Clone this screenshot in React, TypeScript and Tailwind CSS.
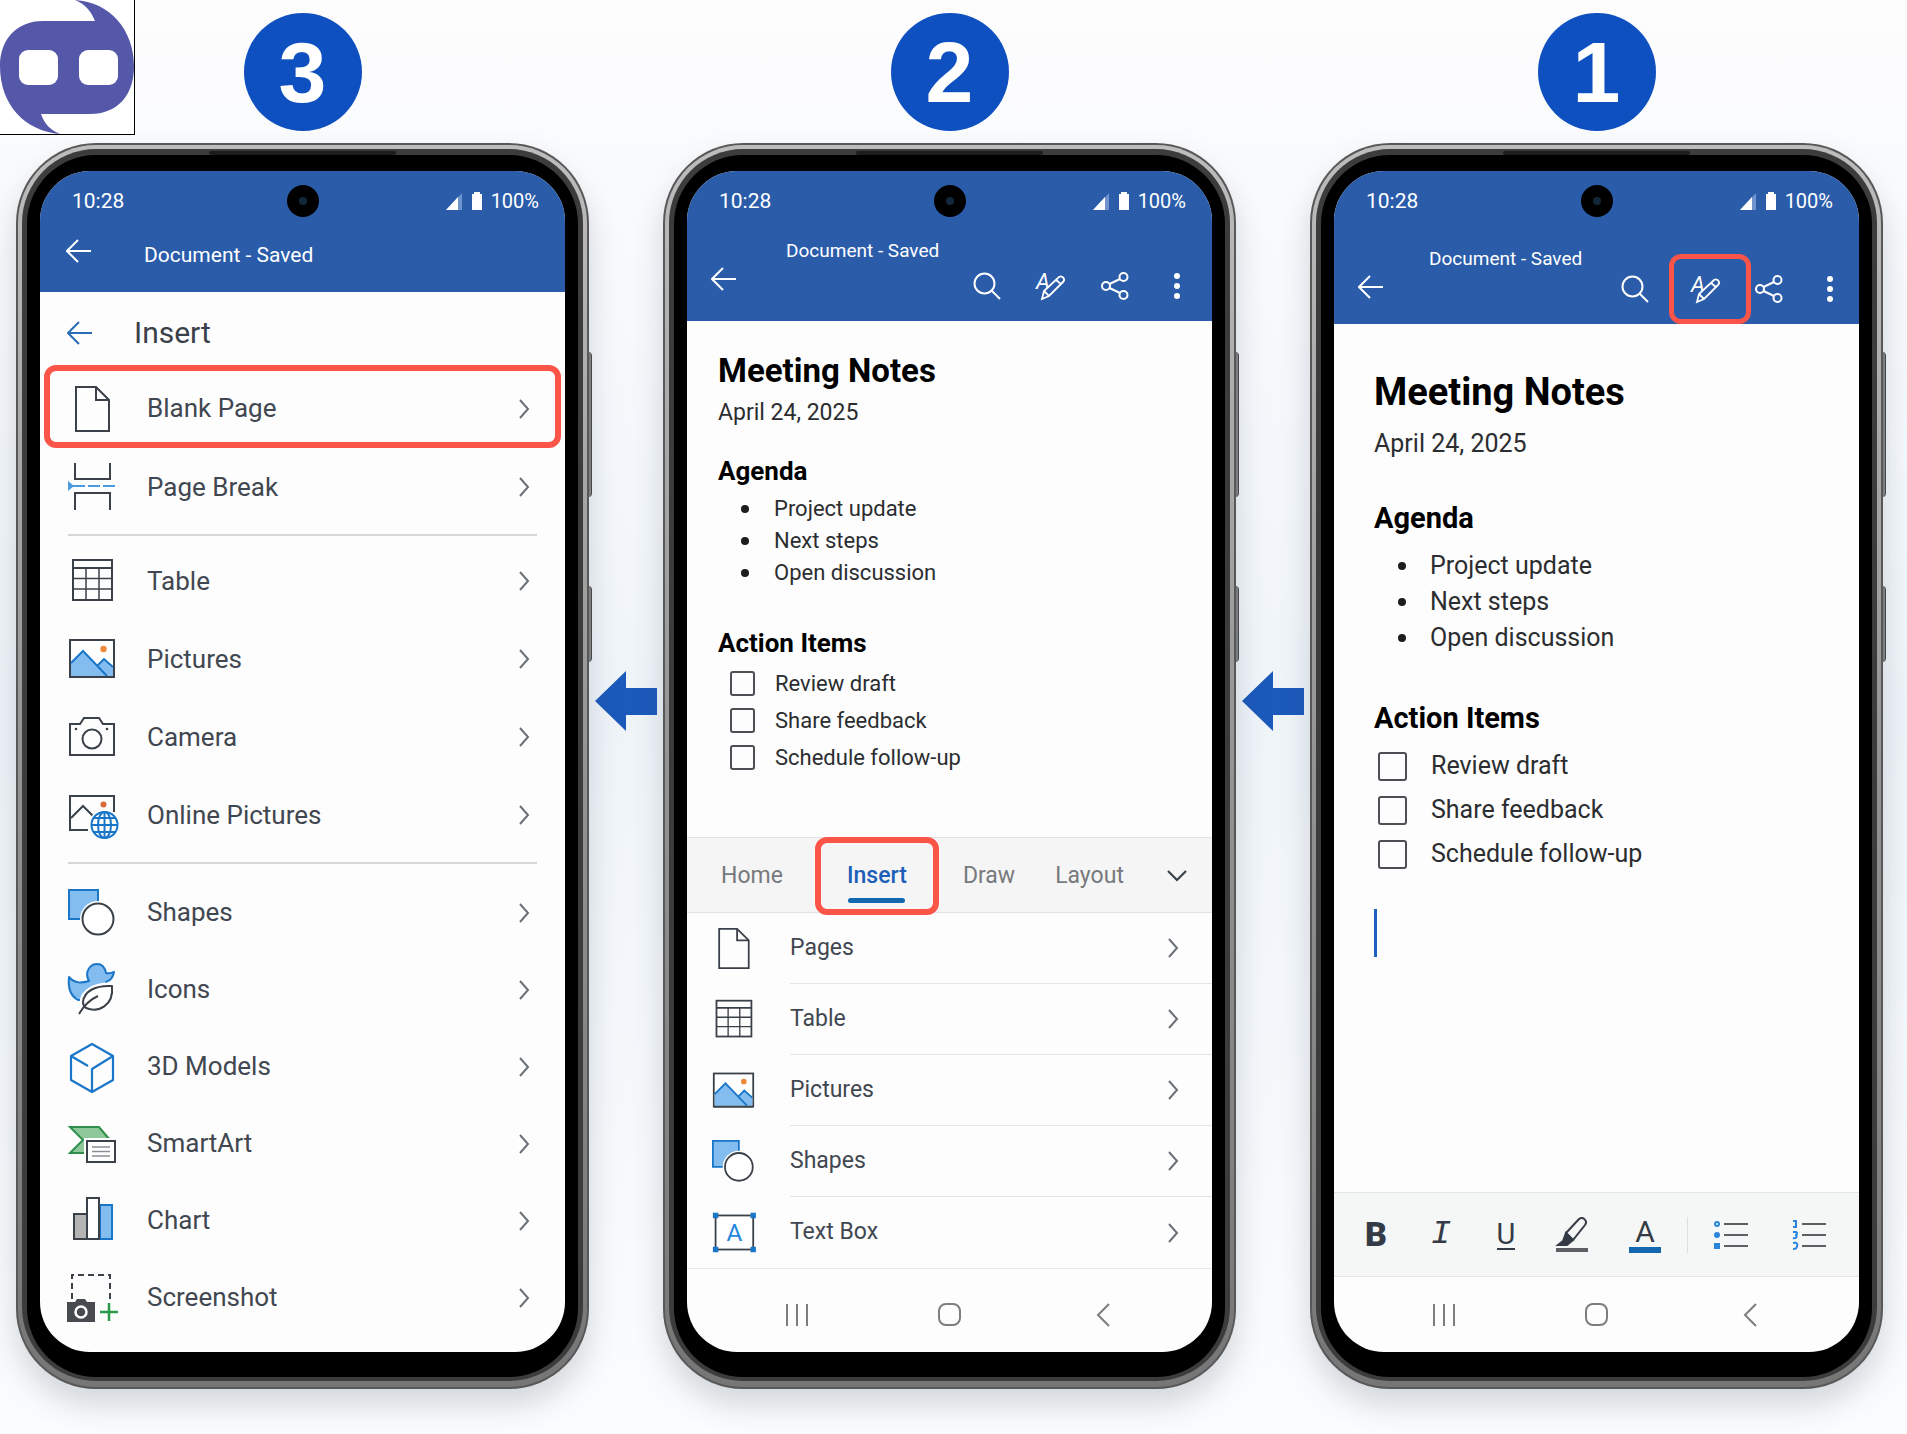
import { ReactNode } from "react";
import clsx from "clsx";

const DARK = "#3b4149";
const BLUE = "#1976c8";
const SKY = "#83bdf0";

/* ---------- list icons, all on a 48 grid ---------- */

function PageIcon() {
    return (
        <g fill="none" stroke={DARK} strokeWidth="2">
            <path d="M8 2H28L41 15V46H8Z" />
            <path d="M28 2V15H41" />
        </g>
    );
}

function PageBreakIcon() {
    return (
        <g fill="none" stroke={DARK} strokeWidth="2">
            <path d="M7 0V16H42V0" />
            <path d="M7 47V30H42V47" />
            <path d="M5 23H48" stroke="#4a9be0" strokeDasharray="12 3" />
            <path d="M0 18L6 23L0 28Z" fill="#4a9be0" stroke="none" />
        </g>
    );
}

function TableIcon() {
    return (
        <g fill="none" stroke={DARK} strokeWidth="2">
            <rect x="5" y="3" width="39" height="40" />
            <path d="M5 11H44" />
            <path d="M5 21.500H44M5 32H44M18 11V43M31 11V43" strokeWidth="1.500" />
        </g>
    );
}

function PicturesIcon() {
    return (
        <g strokeWidth="2">
            <rect x="2" y="5" width="44" height="37" fill="#fff" stroke={DARK} />
            <path d="M3 28L15 16L29 31L36 24L45 32V41H3Z" fill={SKY} />
            <path d="M3 28L15 16L39 41M29 31L36 24L45 32" fill="none" stroke={BLUE} />
            <path d="M2 42H46" stroke={DARK} />
            <circle cx="35.500" cy="14" r="3.200" fill="#ee8a3c" />
        </g>
    );
}

function CameraIcon() {
    return (
        <g fill="none" stroke={DARK} strokeWidth="2">
            <path d="M2 11H12L16 5H31L35 11H46V42H2Z" />
            <circle cx="24" cy="26" r="9.500" />
            <circle cx="8" cy="16" r="1.300" fill={DARK} stroke="none" />
            <circle cx="39" cy="16" r="1.300" fill={DARK} stroke="none" />
        </g>
    );
}

function OnlinePicturesIcon() {
    return (
        <g fill="none" strokeWidth="2">
            <path d="M20 39H2V5H46V21" stroke={DARK} />
            <path d="M3 27L15 15L25 25" stroke={DARK} />
            <circle cx="35.500" cy="13.500" r="3" fill="#d9693a" />
            <circle cx="36.500" cy="34" r="15.500" fill="#fff" />
            <circle cx="36.500" cy="34" r="13" stroke={BLUE} fill="#fff" />
            <ellipse cx="36.500" cy="34" rx="6.500" ry="13" stroke={BLUE} />
            <path d="M36.500 21V47M23.500 34H49.500M26 27H47M26 41H47" stroke={BLUE} />
        </g>
    );
}

function ShapesIcon() {
    return (
        <g strokeWidth="2">
            <rect x="1" y="1" width="29" height="29" fill={SKY} stroke={BLUE} />
            <circle cx="30" cy="30" r="18" fill="#fff" />
            <circle cx="30" cy="30" r="15.500" fill="#fff" stroke={DARK} />
        </g>
    );
}

function DuckLeafIcon() {
    return (
        <g strokeWidth="2" strokeLinejoin="round">
            <path
                d="M1 11C7 18 14 17 21 15C16 6 22 -2 29 -2C34 -2 37 2 38 7C41 8 43 7 46 6C45 12 41 15 38 16V20L14 34H10C1 29 0 20 1 11Z"
                fill={SKY}
                stroke={BLUE}
            />
            <path d="M44 20C28 19 15 26 15 37L18 42C28 47 46 44 44 20Z" fill="#fff" stroke="#fff" strokeWidth="7" />
            <path d="M44 20C28 19 16 25 15 36C15 40 18 42 18 42C30 47 46 40 44 20Z" fill="#fff" stroke={DARK} />
            <path d="M11 48C15 41 21 34 30 30" fill="none" stroke={DARK} />
        </g>
    );
}

function CubeIcon() {
    return (
        <path
            d="M24 1L45 13V37L24 49L3 37V13ZM3 13L20 23M45 13L24 26V49"
            fill="none"
            stroke={BLUE}
            strokeWidth="2.200"
            strokeLinejoin="round"
        />
    );
}

function SmartArtIcon() {
    return (
        <g strokeWidth="2">
            <path d="M2 7H31L42 20V33H2L15 20Z" fill="#8cc899" />
            <path d="M42 20L31 7H2L15 20L2 33H18" fill="none" stroke="#2f8f4c" />
            <rect x="16" y="18" width="36" height="27" fill="#fdfdfd" />
            <rect x="19" y="21" width="28" height="21" fill="#fff" stroke={DARK} />
            <path d="M24 27H42M24 31.500H42M24 36H42" stroke="#8b8f94" strokeWidth="1.500" />
        </g>
    );
}

function ChartIcon() {
    return (
        <g strokeWidth="2">
            <rect x="6" y="17" width="13" height="25" fill="#b4b4b4" stroke={DARK} />
            <rect x="32" y="8" width="12" height="34" fill={SKY} stroke={BLUE} />
            <rect x="19" y="1" width="12" height="41" fill="#fff" stroke={DARK} />
        </g>
    );
}

function ScreenshotIcon() {
    return (
        <g strokeWidth="2" fill="none">
            <path d="M4 25V1H42V29" stroke={DARK} strokeDasharray="6 4" />
            <path d="M-1 28H7L9 25H17L19 28H27V48H-1Z" fill="#474b50" />
            <circle cx="13" cy="38" r="5.500" stroke="#fff" strokeWidth="2.500" />
            <path d="M32 38H50M41 29V47" stroke="#2a9a4a" strokeWidth="2.500" />
        </g>
    );
}

function TextBoxIcon() {
    return (
        <g>
            <rect x="4" y="5" width="42" height="38" fill="#fff" stroke={DARK} strokeWidth="2" />
            <path d="M1 2H7V8H1ZM43 2H49V8H43ZM1 40H7V46H1ZM43 40H49V46H43Z" fill={BLUE} />
            <text x="25" y="33" textAnchor="middle" fontSize="27" fill="#2385dc" className="font-['Roboto',sans-serif]">
                A
            </text>
        </g>
    );
}

/* ---------- small glyphs ---------- */

function BackArrow({ className }: { className?: string }) {
    return (
        <svg viewBox="0 0 25 24" className={clsx("w-[25px] h-6", className)} fill="none" stroke="currentColor" strokeWidth="2">
            <path d="M12 1L1 12L12 23M1 12H25" />
        </svg>
    );
}

function ChevronRight() {
    return (
        <svg viewBox="0 0 12 20" className="w-3 h-5 shrink-0" fill="none" stroke="#6b7077" strokeWidth="2">
            <path d="M2 1L10 10L2 19" />
        </svg>
    );
}

function SearchGlyph() {
    return (
        <svg viewBox="0 0 28 28" className="size-7" fill="none" stroke="currentColor" strokeWidth="2">
            <circle cx="11.500" cy="11.500" r="10" />
            <path d="M18.500 18.500L27 27" />
        </svg>
    );
}

function EditGlyph() {
    return (
        <svg viewBox="0 0 28 28" className="size-7 overflow-visible" fill="none" stroke="currentColor" strokeWidth="1.800">
            <text x="-1" y="17" fontSize="22" fontStyle="italic" fill="currentColor" stroke="none" className="font-['Roboto',sans-serif]">
                A
            </text>
            <path d="M5 27L7 19L22 5C25 3 29 7 26 10L12 24Z" className="fill-[#2a5caa]" />
            <path d="M7 19L12 24M19 8L24 12" />
        </svg>
    );
}

function ShareGlyph() {
    return (
        <svg viewBox="0 0 28 28" className="size-7" fill="none" stroke="currentColor" strokeWidth="2">
            <circle cx="5" cy="14" r="4" />
            <circle cx="22.500" cy="5" r="4" />
            <circle cx="22.500" cy="23" r="4" />
            <path d="M8.500 12L19 7M8.500 16L19 21" />
        </svg>
    );
}

function DotsGlyph() {
    return (
        <svg viewBox="0 0 8 28" className="w-2 h-7" fill="currentColor">
            <circle cx="4" cy="4" r="3" />
            <circle cx="4" cy="14" r="3" />
            <circle cx="4" cy="24" r="3" />
        </svg>
    );
}

/* ---------- phone ---------- */

function Phone({ header, children }: { header: ReactNode; children: ReactNode }) {
    return (
        <div className="relative flex-1 flex flex-col">
            <div className="absolute -right-[3px] top-[209px] w-2 h-[145px] rounded-r-sm bg-linear-to-r from-[#555] to-[#8c8c8c] border-r border-[#444]" />
            <div className="absolute -right-[3px] top-[443px] w-2 h-[76px] rounded-r-sm bg-linear-to-r from-[#555] to-[#8c8c8c] border-r border-[#444]" />
            <div className="relative flex-1 flex flex-col rounded-[80px] p-[2px] bg-[#585858] shadow-[0_16px_30px_rgba(70,85,100,0.22)]">
                <div className="flex-1 flex flex-col rounded-[78px] px-[4px] pt-[4px] pb-[6px] bg-linear-to-b from-[#bdbdbd] via-[#949494] to-[#767676]">
                    <div className="relative flex-1 flex flex-col rounded-[74px] px-[5px] pt-[6px] pb-1 bg-[#3c3c3c]">
                        <div className="absolute top-[2px] left-1/3 right-1/3 h-1 rounded-full bg-[#1d1d1d]" />
                        <div className="flex-1 flex flex-col rounded-[69px] px-[13px] pt-4 pb-[25px] bg-black">
                            <div className="flex-1 flex flex-col rounded-[50px] overflow-hidden bg-[#fdfdfd]">
                                <header className="bg-[#2a5caa] text-white">
                                    <StatusBar />
                                    {header}
                                </header>
                                {children}
                            </div>
                        </div>
                    </div>
                </div>
            </div>
        </div>
    );
}

function StatusBar() {
    return (
        <div className="h-[60px] grid grid-cols-[1fr_auto_1fr] items-center px-[26px]">
            <span className="pl-[6px] text-[21px] leading-6">10:28</span>
            <div className="size-8 rounded-full bg-black flex items-center justify-center">
                <div className="size-2 rounded-full bg-[#12283a]" />
            </div>
            <div className="flex items-center justify-end">
                <svg viewBox="0 0 40 20" className="w-10 h-5 mr-[5px]">
                    <path d="M0 19L16 2V19Z" fill="#6f93cc" />
                    <path d="M0 19L12 6V19Z" fill="#fff" />
                    <path d="M26 3H28V1H34V3H36V19H26Z" fill="#fff" />
                </svg>
                <span className="text-[20px] leading-6">100%</span>
            </div>
        </div>
    );
}

function DocHeader({ marked }: { marked?: boolean }) {
    return (
        <div className={clsx("flex pl-6", marked ? "h-[93px]" : "h-[90px]")}>
            <button aria-label="Back" className={clsx("self-start", marked ? "mt-11" : "mt-9")}>
                <BackArrow />
            </button>
            <span className={clsx("self-start text-[19px] leading-6 whitespace-nowrap", marked ? "mt-4 ml-[46px]" : "mt-2 ml-[50px]")}>
                Document - Saved
            </span>
            <div className={clsx("self-end ml-auto flex items-center h-[70px]", marked ? "pr-[25px]" : "pr-[31px]")}>
                <button aria-label="Search">
                    <SearchGlyph />
                </button>
                {marked ? (
                    <button aria-label="Edit" className="ml-5 mr-1 w-[82px] h-[70px] border-[5px] border-[#fb5448] rounded-xl flex items-center pl-[18px]">
                        <EditGlyph />
                    </button>
                ) : (
                    <button aria-label="Edit" className="mx-9">
                        <EditGlyph />
                    </button>
                )}
                <button aria-label="Share">
                    <ShareGlyph />
                </button>
                <button aria-label="More" className={marked ? "ml-[43px]" : "ml-11"}>
                    <DotsGlyph />
                </button>
            </div>
        </div>
    );
}

const agenda = ["Project update", "Next steps", "Open discussion"];
const actions = ["Review draft", "Share feedback", "Schedule follow-up"];

function DocBody({ large }: { large?: boolean }) {
    return (
        <div className={clsx("flex-1 text-[#2b2d30]", large ? "pl-10 pt-11" : "pl-[31px] pt-7")}>
            <h1 className={clsx("font-bold text-black", large ? "text-[38px] leading-[48px]" : "text-[33px] leading-[44px]")}>Meeting Notes</h1>
            <p className={clsx("leading-10", large ? "text-[25px] mt-2" : "text-[23px]")}>April 24, 2025</p>
            <h2 className={clsx("font-bold text-black", large ? "text-[29px] leading-9 mt-9" : "text-[26px] leading-8 mt-[22px]")}>Agenda</h2>
            <ul className={clsx(large ? "text-[25px] leading-9 mt-3 pl-6" : "text-[22px] leading-8 mt-[6px] pl-[23px]")}>
                {agenda.map((item) => (
                    <li key={item} className={clsx("flex items-center", large ? "gap-6" : "gap-[25px]")}>
                        <span className="size-2 rounded-full bg-[#1d1d1d]" />
                        {item}
                    </li>
                ))}
            </ul>
            <h2 className={clsx("font-bold text-black", large ? "text-[29px] leading-9 mt-11" : "text-[26px] leading-8 mt-[38px]")}>Action Items</h2>
            <div className={clsx(large ? "text-[25px] mt-2 pl-1" : "text-[22px] mt-[6px] pl-3")}>
                {actions.map((item) => (
                    <label key={item} className={clsx("flex items-center", large ? "h-11 gap-6" : "h-[37px] gap-5")}>
                        <input
                            type="checkbox"
                            className={clsx("appearance-none border-2 border-[#4c4f54] rounded-[3px]", large ? "size-[29px]" : "size-[25px]")}
                        />
                        {item}
                    </label>
                ))}
            </div>
            {large && <div className="mt-[33px] h-12 w-[3px] bg-[#1f5fc0]" />}
        </div>
    );
}

function NavBar({ className }: { className: string }) {
    return (
        <nav className={clsx("flex items-center justify-between px-[99px] text-[#7d7d7d]", className)}>
            <button aria-label="Recent apps">
                <svg viewBox="0 0 22 24" className="w-[22px] h-6" stroke="currentColor" strokeWidth="2">
                    <path d="M1 1V23M11 1V23M21 1V23" />
                </svg>
            </button>
            <button aria-label="Home" className="size-[23px] rounded-[8px] border-2 border-current" />
            <button aria-label="Back">
                <svg viewBox="0 0 22 24" className="w-[22px] h-6" fill="none" stroke="currentColor" strokeWidth="2">
                    <path d="M18 1L7 12L18 23" />
                </svg>
            </button>
        </nav>
    );
}

/* ---------- screens ---------- */

function MenuRow({ icon, label, className }: { icon: ReactNode; label: string; className: string }) {
    return (
        <button className={clsx("flex items-center text-left text-[26px] text-[#414750]", className)}>
            <svg viewBox="0 0 48 48" className="size-12 overflow-visible shrink-0">
                {icon}
            </svg>
            <span className="ml-[31px] flex-1">{label}</span>
            <ChevronRight />
        </button>
    );
}

const mediaRows = [
    { label: "Table", icon: <TableIcon /> },
    { label: "Pictures", icon: <PicturesIcon /> },
    { label: "Camera", icon: <CameraIcon /> },
    { label: "Online Pictures", icon: <OnlinePicturesIcon /> },
];

const drawingRows = [
    { label: "Shapes", icon: <ShapesIcon /> },
    { label: "Icons", icon: <DuckLeafIcon /> },
    { label: "3D Models", icon: <CubeIcon /> },
    { label: "SmartArt", icon: <SmartArtIcon /> },
    { label: "Chart", icon: <ChartIcon /> },
    { label: "Screenshot", icon: <ScreenshotIcon /> },
];

function InsertMenuPhone() {
    return (
        <Phone
            header={
                <div className="h-[61px] flex items-start pl-[26px] pt-2">
                    <button aria-label="Back">
                        <BackArrow />
                    </button>
                    <span className="ml-[53px] mt-1 text-[21px] leading-6">Document - Saved</span>
                </div>
            }
        >
            <div className="flex flex-col pb-4">
                <div className="h-[73px] flex items-center pl-[27px] pt-2">
                    <button aria-label="Back" className="text-[#2a6cb8]">
                        <BackArrow />
                    </button>
                    <h2 className="ml-[42px] text-[30px] leading-9 text-[#3a4049]">Insert</h2>
                </div>
                <div className="mx-1 border-[6px] border-[#fb5448] rounded-xl flex">
                    <MenuRow icon={<PageIcon />} label="Blank Page" className="h-[71px] pt-1 flex-1 pl-[18px] pr-[25px]" />
                </div>
                <MenuRow icon={<PageBreakIcon />} label="Page Break" className="h-[78px] pl-7 pr-[35px]" />
                <hr className="mx-7 mt-2 mb-[6px] border-t-2 border-[#d5d7d9]" />
                {mediaRows.map((row) => (
                    <MenuRow key={row.label} {...row} className="h-[78px] pl-7 pr-[35px]" />
                ))}
                <hr className="mx-7 mt-2 mb-[10px] border-t-2 border-[#d5d7d9]" />
                {drawingRows.map((row) => (
                    <MenuRow key={row.label} {...row} className="h-[77px] pl-7 pr-[35px]" />
                ))}
            </div>
        </Phone>
    );
}

const ribbonRows = [
    { label: "Pages", icon: <PageIcon /> },
    { label: "Table", icon: <TableIcon /> },
    { label: "Pictures", icon: <PicturesIcon /> },
    { label: "Shapes", icon: <ShapesIcon /> },
    { label: "Text Box", icon: <TextBoxIcon /> },
];

function InsertTabPhone() {
    return (
        <Phone header={<DocHeader />}>
            <DocBody />
            <div className="h-[76px] flex items-center bg-[#f5f5f5] border-y border-[#e2e3e4] pt-[2px] pl-[34px] pr-[25px] text-[23px] text-[#77797c]">
                <button>Home</button>
                <button className="ml-8 w-[124px] h-[78px] border-[6px] border-[#fb5448] rounded-xl flex flex-col items-center justify-end pb-[6px] text-[#1c5fb8] font-medium">
                    <span className="leading-8">Insert</span>
                    <span className="mt-[6px] w-[57px] h-[5px] rounded-full bg-[#1468b0]" />
                </button>
                <button className="ml-6">Draw</button>
                <button className="ml-10">Layout</button>
                <button aria-label="More tabs" className="ml-auto">
                    <svg viewBox="0 0 20 12" className="w-5 h-3" fill="none" stroke="#3b4149" strokeWidth="2.200">
                        <path d="M1 1L10 10L19 1" />
                    </svg>
                </button>
            </div>
            <div className="border-b border-[#e6e8ea]">
                {ribbonRows.map((row, index) => (
                    <button key={row.label} className="w-full h-[71px] flex items-center pl-[25px] text-left text-[23px] text-[#414750]">
                        <svg viewBox="0 0 48 48" className="size-[43px] overflow-visible shrink-0">
                            {row.icon}
                        </svg>
                        <span
                            className={clsx(
                                "ml-[35px] flex-1 self-stretch flex items-center justify-between pr-[33px]",
                                index < ribbonRows.length - 1 && "border-b border-[#e3e6e8]"
                            )}
                        >
                            {row.label}
                            <ChevronRight />
                        </span>
                    </button>
                ))}
            </div>
            <NavBar className="h-[83px] pt-2" />
        </Phone>
    );
}

function FormatBar() {
    return (
        <div className="h-[85px] flex items-center bg-[#f5f6f6] border-y border-[#e2e3e4] pl-[26px] text-[#343b46]">
            <div className="flex items-center gap-[33px]">
                <button aria-label="Bold" className="w-8 text-[34px] font-black">B</button>
                <button aria-label="Italic" className="w-8 text-[34px] italic font-['Liberation_Mono',monospace]">I</button>
                <button aria-label="Underline" className="w-8 text-[29px] leading-7">
                    <span className="inline-block border-b-2 border-current">U</span>
                </button>
                <button aria-label="Highlight">
                    <svg viewBox="0 0 34 36" className="w-[34px] h-9" fill="none" stroke="currentColor" strokeWidth="2">
                        <path d="M11 16L24 2C28 -1 33 4 30 8L18 23Z" />
                        <path d="M11 16L18 23L12 28H3L8 24Z" fill="currentColor" />
                        <path d="M1 33H33" stroke="#5d6064" strokeWidth="4" />
                    </svg>
                </button>
            </div>
            <button aria-label="Font color" className="ml-10 w-8 text-[30px] leading-[30px] text-center border-b-[6px] border-[#1468b0]">A</button>
            <span className="ml-[26px] w-px h-9 bg-[#dcdedf]" />
            <button aria-label="Bullets" className="ml-[26px]">
                <svg viewBox="0 0 34 30" className="w-[34px] h-[30px]" fill="none" strokeWidth="2">
                    <path d="M10 4H34M10 15H34M10 26H34" stroke="#5d6064" />
                    <circle cx="3" cy="4" r="2" stroke="#2a86dc" />
                    <circle cx="3" cy="15" r="3" fill="#2a86dc" />
                    <path d="M0 23H6V29H0Z" fill="#2a86dc" />
                </svg>
            </button>
            <button aria-label="Numbering" className="ml-11">
                <svg viewBox="0 0 34 30" className="w-[34px] h-[30px]" fill="none" strokeWidth="2">
                    <path d="M10 4H34M10 15H34M10 26H34" stroke="#5d6064" />
                    <path d="M1 1H4V7M1 7H5M1 12H4C6 13 5 15 3 15C6 15 5 19 1 18M1 23C5 22 6 24 5 26C5 28 4 29 1 29" stroke="#2a86dc" />
                </svg>
            </button>
        </div>
    );
}

function EditorPhone() {
    return (
        <Phone header={<DocHeader marked />}>
            <DocBody large />
            <FormatBar />
            <NavBar className="h-[75px]" />
        </Phone>
    );
}

/* ---------- page ---------- */

function Step({ number, children }: { number: number; children: ReactNode }) {
    return (
        <section className="flex flex-col">
            <div className="mx-auto mb-3 size-[118px] rounded-full bg-[#0f50c0] text-white flex items-center justify-center font-['Liberation_Sans',Arial,sans-serif] font-bold text-[86px] leading-none">
                {number}
            </div>
            {children}
        </section>
    );
}

function StepArrow() {
    return (
        <svg viewBox="0 0 62 60" className="w-[62px] h-[60px] self-center justify-self-center" fill="#1b59bb">
            <path d="M0 30L31 0V17H62V44H31V60Z" />
        </svg>
    );
}

function Logo() {
    return (
        <svg viewBox="0 0 134 134" className="absolute left-0 top-0 size-[135px] bg-white border-r border-b border-black">
            <path
                d="M75 0C110 2 134 30 134 66C134 95 118 114 90 114H41C44 123 50 130 60 134C25 131 0 105 0 66C0 40 16 21 43 21H95C91 11 85 4 75 0Z"
                fill="#5558a8"
            />
            <rect x="19" y="50" width="39" height="35" rx="9" fill="#fff" />
            <rect x="79" y="50" width="39" height="35" rx="9" fill="#fff" />
        </svg>
    );
}

function App() {
    return (
        <main className="relative min-h-screen pt-[13px] pb-11 pl-4 pr-6 bg-linear-to-b from-[#fdfdfe] via-[#eff4f9] to-[#fbfcfd] font-['Roboto',sans-serif]">
            <div className="grid grid-cols-[1fr_74px_1fr_74px_1fr]">
                <Step number={3}>
                    <InsertMenuPhone />
                </Step>
                <StepArrow />
                <Step number={2}>
                    <InsertTabPhone />
                </Step>
                <StepArrow />
                <Step number={1}>
                    <EditorPhone />
                </Step>
            </div>
            <Logo />
        </main>
    );
}

export default App;
